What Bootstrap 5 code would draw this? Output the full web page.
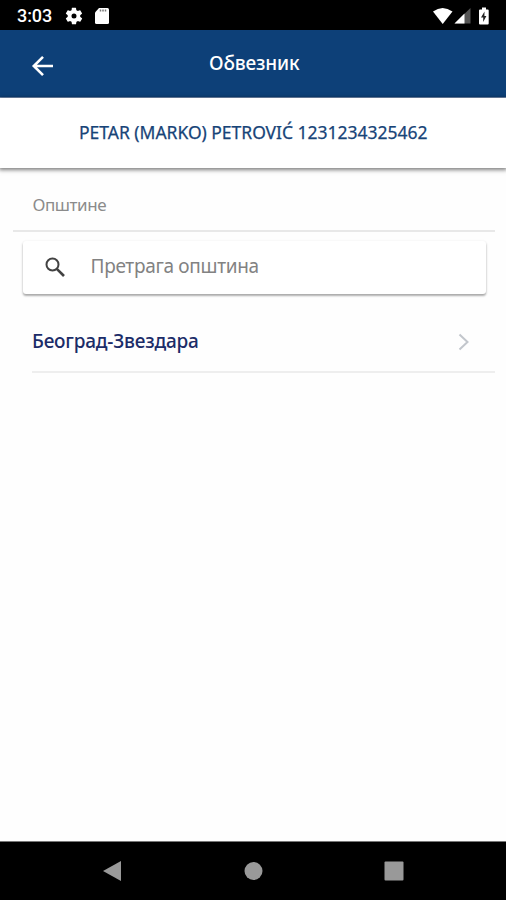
<!DOCTYPE html>
<html lang="sr">
<head>
<meta charset="utf-8">
<meta name="viewport" content="width=device-width, initial-scale=1">
<title>Обвезник</title>
<link href="https://cdn.jsdelivr.net/npm/bootstrap@5.3.0/dist/css/bootstrap.min.css" rel="stylesheet">
<style>
body{font-family:"Noto Sans","Open Sans",sans-serif;background:#fefefe;line-height:1}
svg{display:block;flex:none}
.screen{height:900px;overflow:hidden}
.status{height:30px;background:#000;padding:2px 15px 0 17px}
.clock{font:500 18px/28px Roboto,sans-serif;letter-spacing:-.1px;width:47px}
.appbar{height:68px;background:#0d4078;border-bottom:1px solid #7790b5;padding-left:31px}
.appbar h1{font-size:19px;font-weight:500;line-height:24px;letter-spacing:-.15px;margin:0 0 2px;width:90px}
.side{width:178px}
.person{height:70px;background:#fff;color:#174478;font-size:17.5px;letter-spacing:0;font-weight:400;-webkit-text-stroke:.25px #174478;box-shadow:0 1px 4px 1px rgba(0,0,0,.5);padding-left:79px}
.person-name{letter-spacing:-.02px}
.list{padding:0 11px 0 13px}
.heading{height:64px;border-bottom:2px solid #e8e8e8;color:#8b8b8b;font-size:17px;letter-spacing:-.45px;padding:11px 0 0 19.5px}
.search{height:53px;margin:9px 9px 0 10px;padding-left:22px;background:#fff;border-radius:3px;box-shadow:0 2px 2px rgba(0,0,0,.26),0 1px 3px rgba(0,0,0,.14)}
.search input{font-size:19px;letter-spacing:-.3px;padding:0;margin:0 0 3px 24.5px;height:32px;color:#777;background:none}
.search input::placeholder{color:#828282;opacity:1}
.search input:focus{box-shadow:none;background:none}
.entry{height:62px;margin:17px 0 0 19px;border-bottom:2px solid #eee;color:#1b2c68;font-size:19px;letter-spacing:-.2px;font-weight:500;padding-right:26px}
.keys{height:59px;background:#000;border-top:1px solid #777;padding:0 102px}
</style>
<script src="https://cdn.jsdelivr.net/npm/bootstrap@5.3.0/dist/js/bootstrap.bundle.min.js"></script>
</head>
<body>
<div class="screen d-flex flex-column">
  <div class="status d-flex align-items-center text-white">
    <span class="clock">3:03</span>
    <svg width="20" height="20" viewBox="0 0 24 24" fill="#fff"><path d="M19.4 13a7.800 7.800 0 0 0 0-2l2.100-1.600c.2-.2.300-.4.100-.7l-2-3.400c-.1-.2-.4-.3-.6-.2l-2.500 1a7.300 7.300 0 0 0-1.700-1L14.400 2.400a.5.5 0 0 0-.5-.4h-4c-.2 0-.4.200-.5.400L9.100 5.100c-.6.200-1.200.6-1.700 1l-2.500-1c-.2-.1-.5 0-.6.2l-2 3.400c-.1.200-.1.500.1.700L4.500 11a7.800 7.800 0 0 0 0 2l-2.100 1.600c-.2.200-.2.400-.1.700l2 3.400c.1.200.4.300.6.200l2.500-1c.5.400 1.100.7 1.700 1l.4 2.700c0 .2.200.4.500.4h4c.2 0 .4-.2.500-.4l.4-2.700c.6-.3 1.200-.6 1.700-1l2.500 1c.2.100.5 0 .6-.2l2-3.400c.1-.2.100-.5-.1-.7zM12 15a3 3 0 1 1 0-6 3 3 0 0 1 0 6z"/></svg>
    <svg class="ms-2" width="18" height="18" viewBox="0 0 18 18"><path d="M7 1h8.500a1.500 1.500 0 0 1 1.500 1.500v13a1.500 1.500 0 0 1-1.500 1.500h-11A1.500 1.500 0 0 1 3 15.500V5.500z" fill="#fff"/><path d="M8.500 2.500v2M11 2.500v2M13.500 2.500v2" stroke="#777" stroke-width="1.500"/></svg>
    <svg class="ms-auto" width="59" height="20" viewBox="0 0 59 20"><path d="M1 5.500Q10.500 -1.500 20.500 5.500L10.700 18z" fill="#fff"/><path d="M22.500 17.500 38.500 2v15.500z" fill="#555"/><path d="M22.500 17.500 32.500 7.500v10z" fill="#fff"/><path d="M50 1.500h4v2h1.700q1 0 1 1v13q0 1-1 1h-7.700q-1 0-1-1v-13q0-1 1-1h2z" fill="#fff"/><path d="m52.500 5.500-3.500 6h2.200v4.500l3.200-6h-2z" fill="#222"/></svg>
  </div>
  <header class="appbar d-flex align-items-center text-white">
    <div class="side"><svg width="23" height="22" viewBox="0 0 23 22" fill="none" stroke="#fff" stroke-width="2.600" transform="translate(0 2)"><path d="M22 11H3M12 1.800 2.800 11 12 20.200"/></svg></div>
    <h1 class="text-nowrap">Обвезник</h1>
  </header>
  <div class="person d-flex align-items-center text-nowrap position-relative"><span class="person-name">PETAR (MARKO) PETROVIĆ 1231234325462</span></div>
  <main class="list flex-grow-1">
    <div class="heading d-flex align-items-center"><span>Општине</span></div>
    <div class="search d-flex align-items-center">
      <svg width="21" height="21" viewBox="0 0 21 21" fill="none" stroke="#424242"><circle cx="7.500" cy="7.500" r="6" stroke-width="2"/><path d="m11.800 11.800 7.200 7.200" stroke-width="2.600"/></svg>
      <input class="form-control border-0" type="text" placeholder="Претрага општина">
    </div>
    <div class="entry d-flex align-items-center justify-content-between"><span>Београд-Звездара</span>
      <svg width="11" height="18" viewBox="0 0 11 18" fill="none" stroke="#c2c6cc" stroke-width="2" transform="translate(0 1)"><path d="m1.500 1.500 8 7.500-8 7.500"/></svg>
    </div>
  </main>
  <nav class="keys d-flex align-items-center justify-content-between">
    <svg width="20" height="22" viewBox="0 0 20 22"><path d="M1 11 19 1v20z" fill="#999"/></svg>
    <svg width="20" height="20" viewBox="0 0 20 20"><circle cx="10.500" cy="10" r="9" fill="#999"/></svg>
    <svg width="20" height="20" viewBox="0 0 20 20"><rect x=".5" y=".5" width="19" height="19" rx="1" fill="#999"/></svg>
  </nav>
</div>
</body>
</html>
